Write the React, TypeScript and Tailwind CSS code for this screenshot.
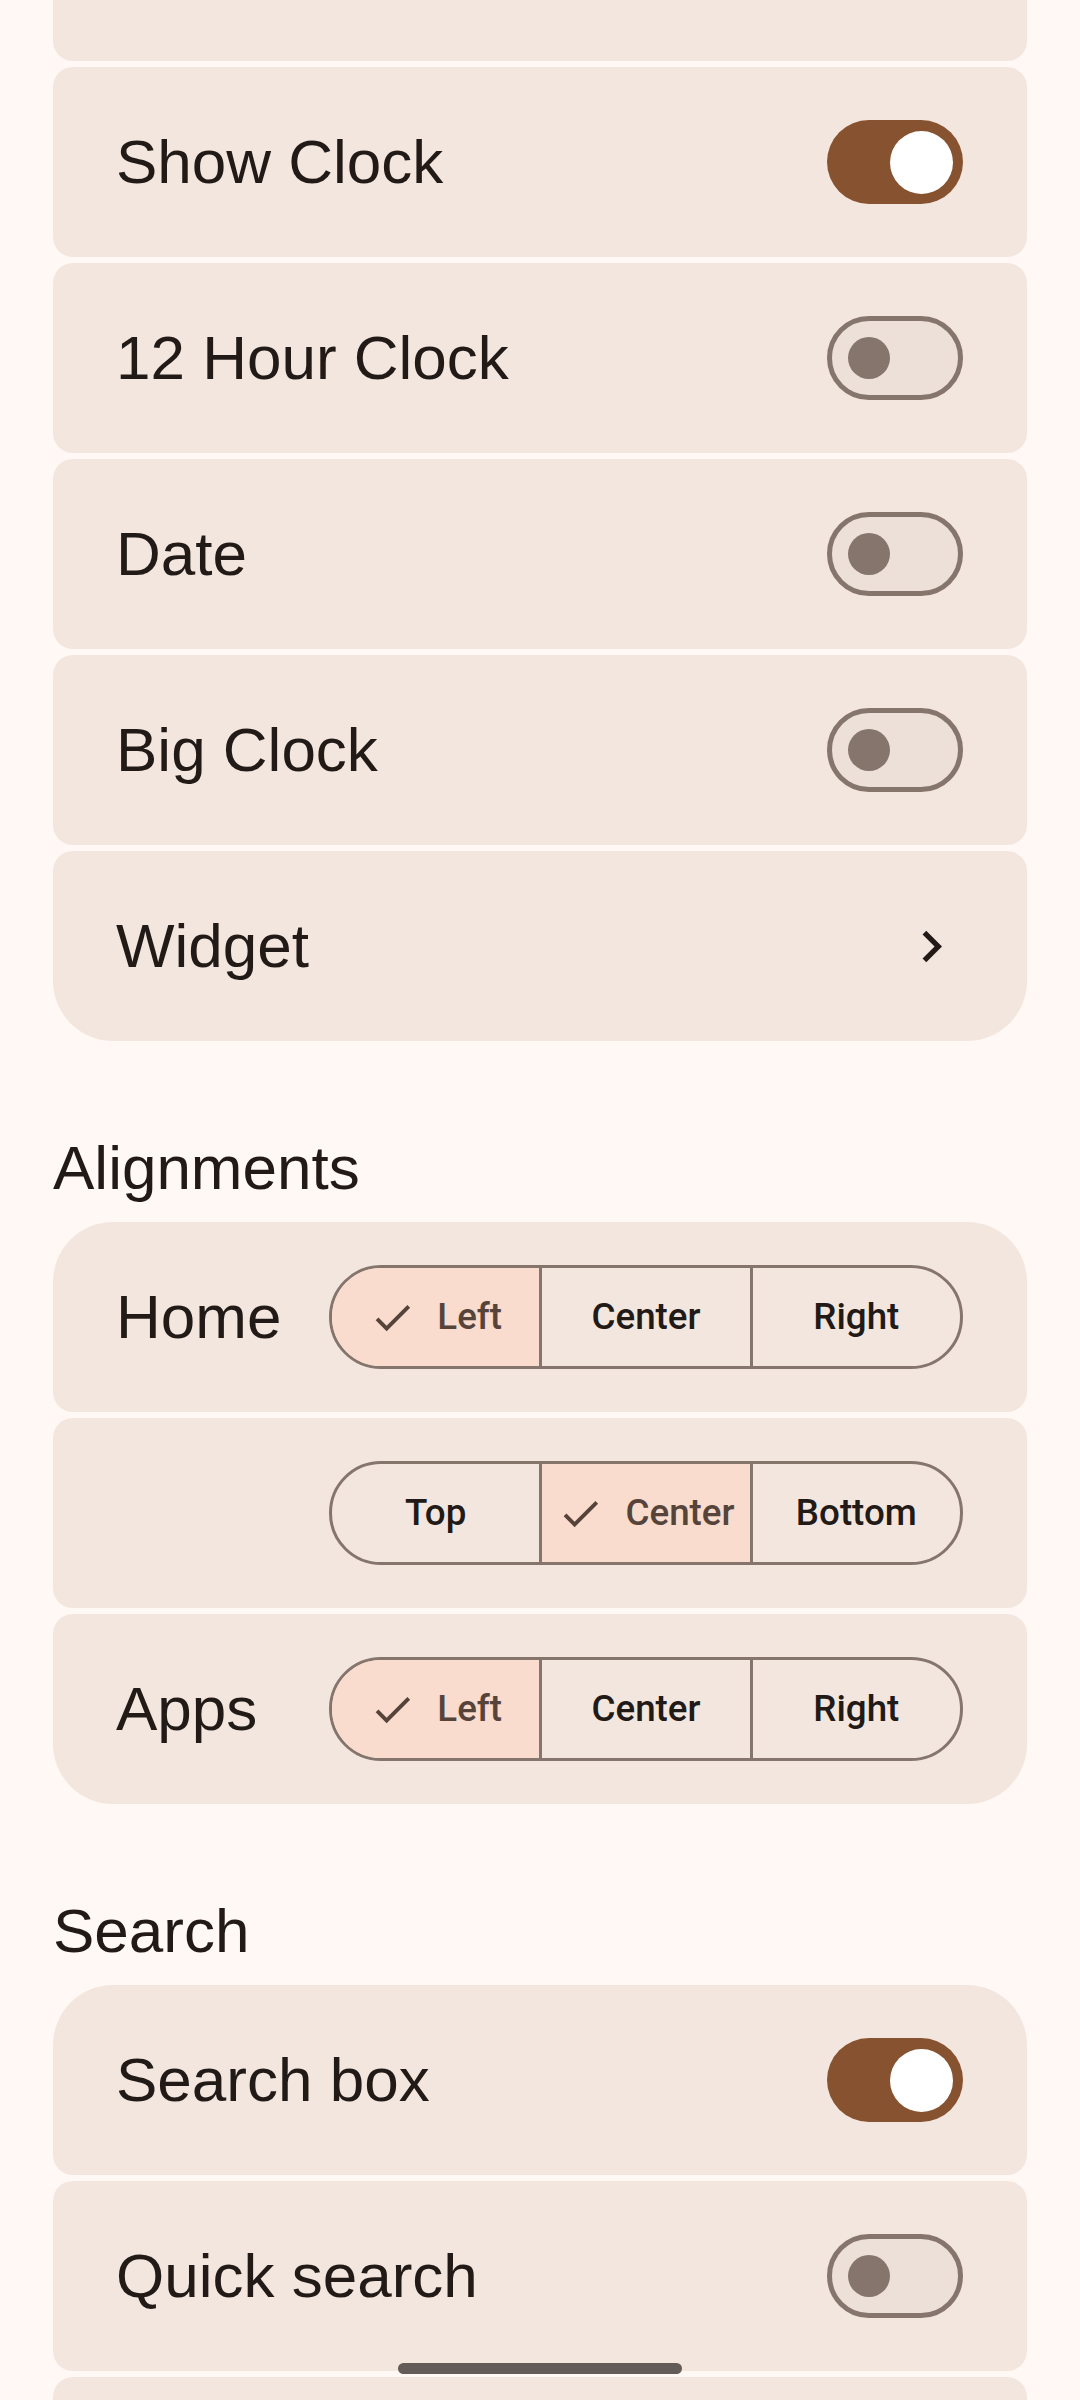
import React from "react";

const LABEL_FONT = { fontFamily: '"Liberation Sans", Arial, sans-serif' };
const BTN_FONT = { fontFamily: 'Roboto, "Liberation Sans", sans-serif' };

type Corner = "small" | "large";

function Card({
  top = "small",
  bottom = "small",
  children,
}: {
  top?: Corner;
  bottom?: Corner;
  children?: React.ReactNode;
}) {
  const t = top === "large" ? "rounded-t-[60px]" : "rounded-t-[20px]";
  const b = bottom === "large" ? "rounded-b-[60px]" : "rounded-b-[20px]";
  return (
    <div
      className={`h-[190px] bg-[#F3E6DF] ${t} ${b} flex items-center pl-[63px] pr-[64px]`}
    >
      {children}
    </div>
  );
}

function Label({ children }: { children: React.ReactNode }) {
  return (
    <div
      className="flex-1 text-[62px] leading-[62px] text-[#211A16] whitespace-nowrap"
      style={LABEL_FONT}
    >
      {children}
    </div>
  );
}

function Switch({ on }: { on: boolean }) {
  if (on) {
    return (
      <div className="relative w-[136px] h-[84px] rounded-full bg-[#86522F] shrink-0">
        <div className="absolute left-[63px] top-[10.5px] w-[63px] h-[63px] rounded-full bg-white" />
      </div>
    );
  }
  return (
    <div className="relative w-[136px] h-[84px] rounded-full bg-[#ECE0D9] border-[5px] border-[#85756D] shrink-0">
      <div className="absolute left-[16px] top-[16px] w-[42px] h-[42px] rounded-full bg-[#85756D]" />
    </div>
  );
}

function Chevron() {
  return (
    <svg width="63" height="63" viewBox="0 0 24 24" className="shrink-0">
      <path
        d="M10 6L8.59 7.41 13.17 12l-4.58 4.59L10 18l6-6z"
        fill="#211A16"
      />
    </svg>
  );
}

function Check() {
  return (
    <svg width="47" height="47" viewBox="0 0 24 24" className="shrink-0">
      <path
        d="M9 16.17L4.83 12l-1.42 1.41L9 19 21 7l-1.41-1.41z"
        fill="#56433A"
      />
    </svg>
  );
}

function Segmented({
  items,
  selected,
}: {
  items: string[];
  selected: number;
}) {
  return (
    <div
      className="flex w-[634px] h-[104px] rounded-full border-[3px] border-[#85756D] overflow-hidden shrink-0"
      style={BTN_FONT}
    >
      {items.map((it, i) => {
        const sel = i === selected;
        return (
          <div
            key={it}
            className={`flex-1 flex items-center justify-center gap-[21px] text-[36.75px] font-medium ${
              i > 0 ? "border-l-[3px] border-[#85756D]" : ""
            } ${sel ? "bg-[#F9DCCD] text-[#56433A]" : "text-[#211A16]"}`}
          >
            {sel && <Check />}
            <span>{it}</span>
          </div>
        );
      })}
    </div>
  );
}

function Header({ children }: { children: React.ReactNode }) {
  return (
    <div
      className="mt-[96px] mb-[23px] text-[62px] leading-[62px] text-[#211A16]"
      style={LABEL_FONT}
    >
      {children}
    </div>
  );
}

export default function App() {
  return (
    <div className="relative w-[1080px] h-[2400px] overflow-hidden bg-[#FFF8F5]">
      <div className="mx-[53px] -mt-[129px] flex flex-col">
        <div className="flex flex-col gap-[6px]">
          <Card top="large">
            <Label>Change Launcher App</Label>
          </Card>
          <Card>
            <Label>Show Clock</Label>
            <Switch on />
          </Card>
          <Card>
            <Label>12 Hour Clock</Label>
            <Switch on={false} />
          </Card>
          <Card>
            <Label>Date</Label>
            <Switch on={false} />
          </Card>
          <Card>
            <Label>Big Clock</Label>
            <Switch on={false} />
          </Card>
          <Card bottom="large">
            <Label>Widget</Label>
            <Chevron />
          </Card>
        </div>

        <Header>Alignments</Header>
        <div className="flex flex-col gap-[6px]">
          <Card top="large">
            <Label>Home</Label>
            <Segmented items={["Left", "Center", "Right"]} selected={0} />
          </Card>
          <Card>
            <Label>{""}</Label>
            <Segmented items={["Top", "Center", "Bottom"]} selected={1} />
          </Card>
          <Card bottom="large">
            <Label>Apps</Label>
            <Segmented items={["Left", "Center", "Right"]} selected={0} />
          </Card>
        </div>

        <Header>Search</Header>
        <div className="flex flex-col gap-[6px]">
          <Card top="large">
            <Label>Search box</Label>
            <Switch on />
          </Card>
          <Card>
            <Label>Quick search</Label>
            <Switch on={false} />
          </Card>
          <Card />
        </div>
      </div>
      <div className="absolute left-[398px] top-[2363px] w-[284px] h-[11px] rounded-full bg-[#625B57]" />
    </div>
  );
}
